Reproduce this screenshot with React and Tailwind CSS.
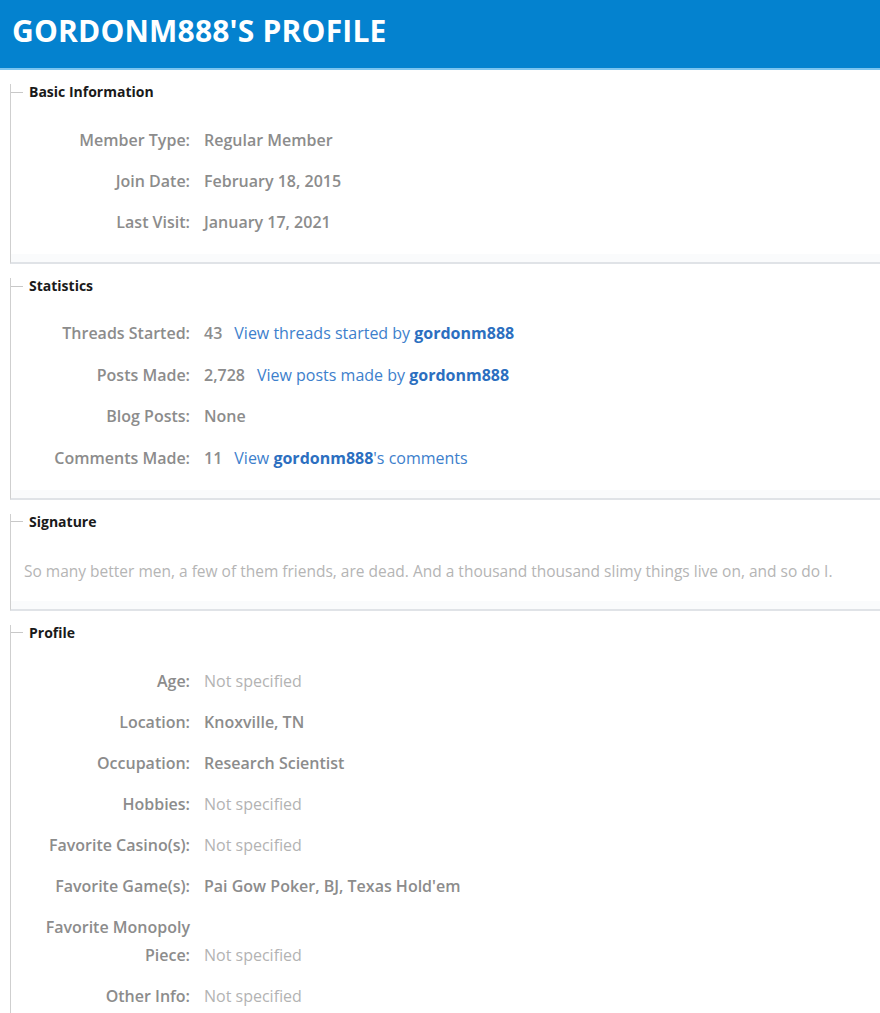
import React from "react";

const font = { fontFamily: '"Open Sans", "Liberation Sans", Arial, sans-serif' };

function Legend({ title }) {
  return (
    <div className="flex items-center h-4 -mt-2">
      <span className="w-3 h-px bg-[#c8c8c8]" />
      <span className="pl-1.5 text-[14px] font-bold text-[#1a1a1a] leading-4">{title}</span>
    </div>
  );
}

function Row({ label, children }) {
  return (
    <div className="flex items-end gap-[14px]">
      <div className="w-[150px] ml-[29px] text-right font-semibold text-[#8c8c8c] text-[16px] leading-[28px]">
        {label}
      </div>
      <div className="text-[16px] leading-[28px] whitespace-nowrap">{children}</div>
    </div>
  );
}

const Val = ({ children }) => <span className="font-semibold text-[#8c8c8c]">{children}</span>;
const None = () => <span className="text-[#b3b3b3]">Not specified</span>;
const Link = ({ children }) => <a href="#" className="text-[#3d80cc] ml-3">{children}</a>;
const Name = () => <b className="font-bold text-[#2c6fc0]">gordonm888</b>;

function Section({ title, children, className = "" }) {
  return (
    <section className="ml-[10px] mt-[22px] border-l border-[#cfcfcf] border-b-2 border-b-[#e0e3e7]">
      <Legend title={title} />
      <div className={className}>{children}</div>
      <div className="h-2 bg-[#fafbfc]" />
    </section>
  );
}

export default function App() {
  return (
    <div className="min-h-screen bg-white" style={font}>
      <header className="h-[70px] bg-[#0482cf] border-b-2 border-[#7cc4ef] flex items-center px-3 pb-[7px]">
        <h1 className="text-[30px] font-bold text-white tracking-[0.2px]">GORDONM888'S PROFILE</h1>
      </header>

      <Section title="Basic Information" className="pt-[26px] pb-[18px] flex flex-col gap-[13px]">
        <Row label="Member Type:"><Val>Regular Member</Val></Row>
        <Row label="Join Date:"><Val>February 18, 2015</Val></Row>
        <Row label="Last Visit:"><Val>January 17, 2021</Val></Row>
      </Section>

      <Section title="Statistics" className="pt-[25px] pb-[18px] flex flex-col gap-[13.5px]">
        <Row label="Threads Started:">
          <Val>43</Val>
          <Link>View threads started by <Name /></Link>
        </Row>
        <Row label="Posts Made:">
          <Val>2,728</Val>
          <Link>View posts made by <Name /></Link>
        </Row>
        <Row label="Blog Posts:"><Val>None</Val></Row>
        <Row label="Comments Made:">
          <Val>11</Val>
          <Link>View <Name />'s comments</Link>
        </Row>
      </Section>

      <Section title="Signature" className="pt-[31px] pb-[20px] pl-[13px]">
        <p className="text-[15.5px] leading-5 text-[#b5b5b5] whitespace-nowrap">
          So many better men, a few of them friends, are dead. And a thousand thousand slimy things live on, and so do I.
        </p>
      </Section>

      <section className="ml-[10px] mt-[22px] border-l border-[#cfcfcf] pb-6">
        <Legend title="Profile" />
        <div className="pt-[26px] flex flex-col gap-[13px]">
          <Row label="Age:"><None /></Row>
          <Row label="Location:"><Val>Knoxville, TN</Val></Row>
          <Row label="Occupation:"><Val>Research Scientist</Val></Row>
          <Row label="Hobbies:"><None /></Row>
          <Row label="Favorite Casino(s):"><None /></Row>
          <Row label="Favorite Game(s):"><Val>Pai Gow Poker, BJ, Texas Hold'em</Val></Row>
          <Row label="Favorite Monopoly Piece:"><None /></Row>
          <Row label="Other Info:"><None /></Row>
        </div>
      </section>
    </div>
  );
}
